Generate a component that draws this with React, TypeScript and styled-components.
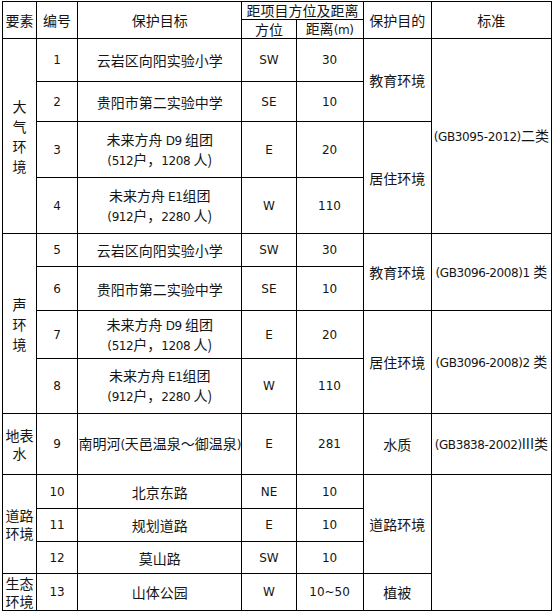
import React from "react";
import styled, { createGlobalStyle } from "styled-components";

const GlobalStyle = createGlobalStyle`
  html, body {
    margin: 0;
    padding: 0;
    background: #ffffff;
  }
`;

function App() {
  return (
    <>
      <GlobalStyle />
      <StPage>
        <StTable>
          <colgroup>
            <col style={{ width: 34 }} />
            <col style={{ width: 41 }} />
            <col style={{ width: 164 }} />
            <col style={{ width: 54 }} />
            <col style={{ width: 67 }} />
            <col style={{ width: 68 }} />
            <col style={{ width: 120 }} />
          </colgroup>
          <tbody>
            <StRow $h={18}>
              <StHead rowSpan={2}>要素</StHead>
              <StHead rowSpan={2}>编号</StHead>
              <StHead rowSpan={2}>保护目标</StHead>
              <StHead colSpan={2}>距项目方位及距离</StHead>
              <StHead rowSpan={2}>保护目的</StHead>
              <StHead rowSpan={2}>标准</StHead>
            </StRow>
            <StRow $h={19}>
              <StHead>方位</StHead>
              <StHead>
                距离<L>(m)</L>
              </StHead>
            </StRow>

            {/* 大气环境 */}
            <StRow $h={43}>
              <StCell rowSpan={4} $stack>
                大<br />气<br />环<br />境
              </StCell>
              <StCell $latin>1</StCell>
              <StCell>云岩区向阳实验小学</StCell>
              <StCell $latin>SW</StCell>
              <StCell $latin>30</StCell>
              <StCell rowSpan={2}>教育环境</StCell>
              <StCell rowSpan={4}>
                <L>(GB3095-2012)</L>二类
              </StCell>
            </StRow>
            <StRow $h={40}>
              <StCell $latin>2</StCell>
              <StCell>贵阳市第二实验中学</StCell>
              <StCell $latin>SE</StCell>
              <StCell $latin>10</StCell>
            </StRow>
            <StRow $h={56}>
              <StCell $latin>3</StCell>
              <StCell>
                未来方舟 <L>D9</L> 组团
                <br />
                <L>(512</L>户，<L>1208</L> 人)
              </StCell>
              <StCell $latin>E</StCell>
              <StCell $latin>20</StCell>
              <StCell rowSpan={2}>居住环境</StCell>
            </StRow>
            <StRow $h={56}>
              <StCell $latin>4</StCell>
              <StCell>
                未来方舟 <L>E1</L>组团
                <br />
                <L>(912</L>户，<L>2280</L> 人)
              </StCell>
              <StCell $latin>W</StCell>
              <StCell $latin>110</StCell>
            </StRow>

            {/* 声环境 */}
            <StRow $h={33}>
              <StCell rowSpan={4} $stack>
                声<br />环<br />境
              </StCell>
              <StCell $latin>5</StCell>
              <StCell>云岩区向阳实验小学</StCell>
              <StCell $latin>SW</StCell>
              <StCell $latin>30</StCell>
              <StCell rowSpan={2}>教育环境</StCell>
              <StCell rowSpan={2}>
                <L>(GB3096-2008)1 </L>类
              </StCell>
            </StRow>
            <StRow $h={44}>
              <StCell $latin>6</StCell>
              <StCell>贵阳市第二实验中学</StCell>
              <StCell $latin>SE</StCell>
              <StCell $latin>10</StCell>
            </StRow>
            <StRow $h={48}>
              <StCell $latin>7</StCell>
              <StCell>
                未来方舟 <L>D9</L> 组团
                <br />
                <L>(512</L>户，<L>1208</L> 人)
              </StCell>
              <StCell $latin>E</StCell>
              <StCell $latin>20</StCell>
              <StCell rowSpan={2}>居住环境</StCell>
              <StCell rowSpan={2}>
                <L>(GB3096-2008)2 </L>类
              </StCell>
            </StRow>
            <StRow $h={55}>
              <StCell $latin>8</StCell>
              <StCell>
                未来方舟 <L>E1</L>组团
                <br />
                <L>(912</L>户，<L>2280</L> 人)
              </StCell>
              <StCell $latin>W</StCell>
              <StCell $latin>110</StCell>
            </StRow>

            {/* 地表水 */}
            <StRow $h={61}>
              <StCell>地表水</StCell>
              <StCell $latin>9</StCell>
              <StCell>
                南明河<L>(</L>天邑温泉～御温泉<L>)</L>
              </StCell>
              <StCell $latin>E</StCell>
              <StCell $latin>281</StCell>
              <StCell>水质</StCell>
              <StCell>
                <L>(GB3838-2002)</L>III类
              </StCell>
            </StRow>

            {/* 道路环境 */}
            <StRow $h={34}>
              <StCell rowSpan={3}>道路环境</StCell>
              <StCell $latin>10</StCell>
              <StCell>北京东路</StCell>
              <StCell $latin>NE</StCell>
              <StCell $latin>10</StCell>
              <StCell rowSpan={3}>道路环境</StCell>
              <StCell rowSpan={4}></StCell>
            </StRow>
            <StRow $h={33}>
              <StCell $latin>11</StCell>
              <StCell>规划道路</StCell>
              <StCell $latin>E</StCell>
              <StCell $latin>10</StCell>
            </StRow>
            <StRow $h={32}>
              <StCell $latin>12</StCell>
              <StCell>莫山路</StCell>
              <StCell $latin>SW</StCell>
              <StCell $latin>10</StCell>
            </StRow>

            {/* 生态环境 */}
            <StRow $h={37}>
              <StCell>生态环境</StCell>
              <StCell $latin>13</StCell>
              <StCell>山体公园</StCell>
              <StCell $latin>W</StCell>
              <StCell $latin>10~50</StCell>
              <StCell>植被</StCell>
            </StRow>
          </tbody>
        </StTable>
      </StPage>
    </>
  );
}

export default App;

const StPage = styled.div`
  padding: 1px 0 0 2px;
`;

const StTable = styled.table`
  width: 550px;
  table-layout: fixed;
  border-collapse: collapse;
  color: #151515;
  font-family: "Noto Sans CJK SC", "Liberation Sans", sans-serif;
  font-size: 14px;
  line-height: 18px;
`;

const StRow = styled.tr<{ $h: number }>`
  height: ${(p) => p.$h}px;
`;

const StHead = styled.td`
  border: 1px solid #000;
  padding: 0;
  text-align: center;
  vertical-align: middle;
  line-height: 15px;
`;

const StCell = styled.td<{ $latin?: boolean; $stack?: boolean }>`
  border: 1px solid #000;
  padding: 0;
  text-align: center;
  vertical-align: middle;
  font-family: ${(p) =>
    p.$latin
      ? `"DejaVu Sans", "Liberation Sans", sans-serif`
      : `"Noto Sans CJK SC", "Liberation Sans", sans-serif`};
  font-size: ${(p) => (p.$latin ? "12px" : "14px")};
  line-height: ${(p) => (p.$stack ? "20px" : "18px")};
  overflow: hidden;
`;

const L = styled.span`
  font-family: "DejaVu Sans", "Liberation Sans", sans-serif;
  font-size: 12px;
  letter-spacing: -0.4px;
`;
